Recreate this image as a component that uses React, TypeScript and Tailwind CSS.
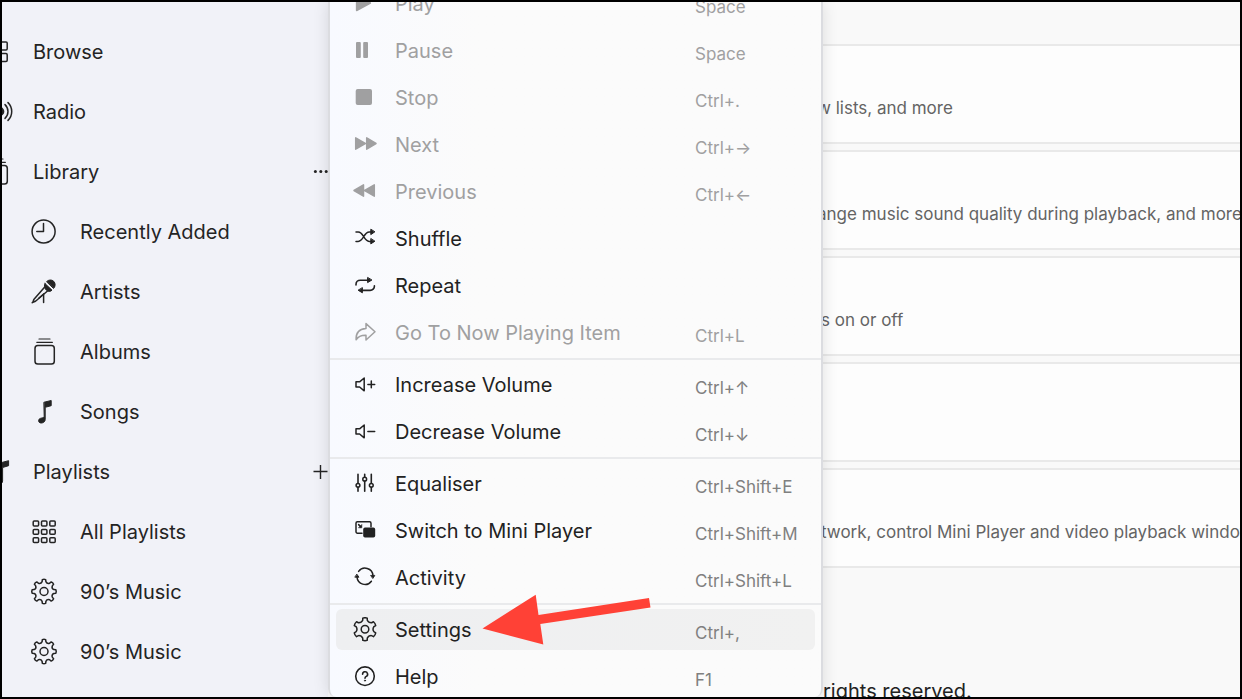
import React from 'react';

/**
 * Builds a closed outline for a cog, centred on (cx, cy)
 */
const cogPath = (teeth: number, cx: number, cy: number, outer: number, inner: number, tip: number, base: number) => {
  const step = (Math.PI * 2) / teeth;
  const point = (angle: number, r: number) =>
    `${(cx + Math.sin(angle) * r).toFixed(2)} ${(cy - Math.cos(angle) * r).toFixed(2)}`;

  let d = '';
  for (let i = 0; i < teeth; i++) {
    const a = i * step;
    d += `${i === 0 ? 'M' : 'L'}${point(a - tip, outer)}`;
    d += `Q${point(a, outer + 0.6)} ${point(a + tip, outer)}`;
    d += `L${point(a + base, inner + 0.8)}`;
    d += `Q${point(a + step / 2, inner - 1.2)} ${point(a + step - base, inner + 0.8)}`;
  }
  return d + 'Z';
};

const SideIcon: React.FC<{ children: React.ReactNode }> = ({ children }) => (
  <svg
    className="size-8 shrink-0"
    viewBox="0 0 32 32"
    fill="none"
    stroke="currentColor"
    strokeWidth="1.5"
    strokeLinecap="round"
    strokeLinejoin="round"
    aria-hidden="true"
  >
    {children}
  </svg>
);

const MenuIcon: React.FC<{ children: React.ReactNode }> = ({ children }) => (
  <svg
    className="size-[25px] shrink-0"
    viewBox="0 0 25 25"
    fill="none"
    stroke="currentColor"
    strokeWidth="1.5"
    strokeLinecap="round"
    strokeLinejoin="round"
    aria-hidden="true"
  >
    {children}
  </svg>
);

const AlbumShapes = () => (
  <>
    <rect x="7" y="9.6" width="19.3" height="18.4" rx="2.8" />
    <path d="M8.8 6.3h15.6M11 3h11" strokeWidth="1.2" />
  </>
);

const SmartPlaylistShapes = () => (
  <>
    <path d={cogPath(8, 16, 15.5, 12, 9.2, 0.14, 0.19)} />
    <circle cx="16" cy="15.5" r="4" />
  </>
);

interface SideItem {
  id: number;
  label: string;
  nested?: boolean;
  action?: 'more' | 'add';
  icon: React.ReactNode;
}

const sideItems: SideItem[] = [
  {
    id: 1,
    label: 'Browse',
    icon: (
      <>
        <rect x="17.6" y="5.9" width="8.6" height="8" rx="1.2" />
        <rect x="17.6" y="17.5" width="8.6" height="8" rx="1.2" />
        <rect x="6" y="5.9" width="8.6" height="8" rx="1.2" />
        <rect x="6" y="17.5" width="8.6" height="8" rx="1.2" />
      </>
    ),
  },
  {
    id: 2,
    label: 'Radio',
    icon: (
      <>
        <circle cx="19" cy="15.5" r="3.6" fill="currentColor" />
        <path d="M24 8.6a9.5 9.5 0 0 1 0 13.8M27 6.6a12.5 12.5 0 0 1 0 17.8" />
      </>
    ),
  },
  { id: 3, label: 'Library', action: 'more', icon: <AlbumShapes /> },
  {
    id: 4,
    label: 'Recently Added',
    nested: true,
    icon: (
      <>
        <circle cx="15.6" cy="15.5" r="11.5" />
        <path d="M15.5 7.6v8H8.8" />
      </>
    ),
  },
  {
    id: 5,
    label: 'Artists',
    nested: true,
    icon: (
      <>
        <path d="M18.8 5.4a4.8 4.8 0 1 1 7 6.8z" fill="currentColor" strokeWidth="1" />
        <path d="M17 7.6l7 6.6c-1.600 1.600-4 1.600-5.800-.2s-2.400-4.600-1.200-6.400z" fill="currentColor" strokeWidth="1" />
        <path d="M16.3 11.400L5.8 23.4l-.9 2.8 2.6-1 12-10.200M4.2 26.7l1.4-1.5" />
        <path d="M15.6 18v8.400M15.600 18l-4.600 4" />
      </>
    ),
  },
  { id: 6, label: 'Albums', nested: true, icon: <AlbumShapes /> },
  {
    id: 7,
    label: 'Songs',
    nested: true,
    icon: (
      <path
        d="M16.2 6.2l7-1.7v5.2l-6 1.6v12.2c0 4-6.6 4.8-6.6 1.2 0-2.6 3.2-2.6 4.6-3 .8-.2 1-.6 1-1.2z"
        fill="currentColor"
        strokeWidth="1"
      />
    ),
  },
  {
    id: 8,
    label: 'Playlists',
    action: 'add',
    icon: (
      <path
        d="M20.4 6.6l7.2-1.9v5l-6 1.8V25c0 4-6.6 4.8-6.6 1.2 0-2.6 3.2-2.6 4.6-3 .6-.2.8-.6.8-1.2z"
        fill="currentColor"
        strokeWidth="1"
      />
    ),
  },
  {
    id: 9,
    label: 'All Playlists',
    nested: true,
    icon: (
      <>
        {[5.1, 13.4, 21.8].map((y) =>
          [5.2, 13.5, 21.8].map((x) => <rect key={`${x}-${y}`} x={x} y={y} width="5.4" height="4.8" rx="1" />),
        )}
      </>
    ),
  },
  { id: 10, label: '90’s Music', nested: true, icon: <SmartPlaylistShapes /> },
  { id: 11, label: '90’s Music', nested: true, icon: <SmartPlaylistShapes /> },
];

interface MenuEntry {
  label: string;
  keys?: string;
  disabled?: boolean;
  active?: boolean;
  icon: React.ReactNode;
}

const speaker = <path d="M12.2 6v12.8L7.6 15H4V9.8h3.6z" />;

const menuGroups: MenuEntry[][] = [
  [
    { label: 'Play', keys: 'Space', disabled: true, icon: <path d="M4.6 4.6v15L18.4 12z" fill="currentColor" /> },
    {
      label: 'Pause',
      keys: 'Space',
      disabled: true,
      icon: (
        <g fill="currentColor" stroke="none">
          <rect x="4" y="4" width="4.8" height="16" rx="1" />
          <rect x="11.2" y="4" width="4.8" height="16" rx="1" />
        </g>
      ),
    },
    {
      label: 'Stop',
      keys: 'Ctrl+.',
      disabled: true,
      icon: <rect x="3.7" y="4" width="16.3" height="16" rx="2" fill="currentColor" stroke="none" />,
    },
    {
      label: 'Next',
      keys: 'Ctrl+→',
      disabled: true,
      icon: <path d="M3.7 5.8v11.4l9.6-5.7zM14.7 5.8v11.4l9.3-5.7z" fill="currentColor" />,
    },
    {
      label: 'Previous',
      keys: 'Ctrl+←',
      disabled: true,
      icon: <path d="M11.5 5.8v11.4L2 11.5zM22.3 5.8v11.4l-9.6-5.7z" fill="currentColor" />,
    },
    {
      label: 'Shuffle',
      icon: (
        <>
          <path d="M4 6h2.2c5.4 0 5.6 9.4 11 9.4H19M4 15.4h2.2c5.4 0 5.6-9.4 11-9.4H19" />
          <path d="M18.8 3.6v5L22.6 6zM18.8 12.9v5l3.8-2.5z" fill="currentColor" strokeWidth="1" />
        </>
      ),
    },
    {
      label: 'Repeat',
      icon: (
        <>
          <path d="M4 12v-.6a4.2 4.2 0 0 1 4.2-4.2H16M22.4 12.8v.4a4.2 4.2 0 0 1-4.2 4.2H10" strokeWidth="1.6" />
          <path d="M15.6 4.8v4.8l4-2.4zM10.4 15v4.8l-4-2.4z" fill="currentColor" strokeWidth="1" />
        </>
      ),
    },
    {
      label: 'Go To Now Playing Item',
      keys: 'Ctrl+L',
      disabled: true,
      icon: <path d="M14 3.6l9 8.2-9 8.2v-4.8c-5-.2-7.6.8-9.9 4.6-.4-7 3.2-11 9.9-11.4z" />,
    },
  ],
  [
    {
      label: 'Increase Volume',
      keys: 'Ctrl+↑',
      icon: (
        <>
          {speaker}
          <path d="M15.9 12.4h6.8M19.3 9v6.8" />
        </>
      ),
    },
    {
      label: 'Decrease Volume',
      keys: 'Ctrl+↓',
      icon: (
        <>
          {speaker}
          <path d="M15.9 12.4h6.8" />
        </>
      ),
    },
  ],
  [
    {
      label: 'Equaliser',
      keys: 'Ctrl+Shift+E',
      icon: (
        <>
          <path d="M6 3.2v9M6 16.4v3.8M12.7 3.2v3M12.7 10.2v10M19.3 3.2v9M19.3 16.4v3.8" strokeWidth="1.6" />
          <circle cx="6" cy="14.3" r="1.9" />
          <circle cx="12.7" cy="8.2" r="1.9" />
          <circle cx="19.3" cy="14.3" r="1.9" />
        </>
      ),
    },
    {
      label: 'Switch to Mini Player',
      keys: 'Ctrl+Shift+M',
      icon: (
        <>
          <path d="M10 15.2H5.4A1.4 1.4 0 0 1 4 13.8V5.2a1.4 1.4 0 0 1 1.4-1.4h12.2A1.4 1.4 0 0 1 19 5.2v3.6" />
          <rect x="11.2" y="9.6" width="12" height="10" rx="1.8" fill="currentColor" stroke="none" />
          <path d="M6.6 6.6l2 2" />
          <path d="M9.8 6.8v3H6.8z" fill="currentColor" strokeWidth="0.6" />
        </>
      ),
    },
    {
      label: 'Activity',
      keys: 'Ctrl+Shift+L',
      icon: (
        <>
          <path d="M6.6 6.4a8 8 0 0 1 14.4 4.2M19.4 16.2A8 8 0 0 1 5 12" />
          <path d="M3.2 12.2h3.8L5 9.4zM19 10.4h3.8L21 13.2z" fill="currentColor" strokeWidth="0.9" />
        </>
      ),
    },
  ],
  [
    {
      label: 'Settings',
      keys: 'Ctrl+,',
      active: true,
      icon: (
        <>
          <path d={cogPath(6, 13, 12.2, 11.3, 8.4, 0.2, 0.25)} />
          <circle cx="13" cy="12.2" r="3.8" />
        </>
      ),
    },
    {
      label: 'Help',
      keys: 'F1',
      icon: (
        <>
          <circle cx="13" cy="12.2" r="9.3" strokeWidth="1.6" />
          <path d="M10.6 10.2a2.5 2.5 0 1 1 3.7 2.2c-.9.5-1.3.9-1.3 1.8" strokeWidth="1.6" />
          <circle cx="13" cy="16.6" r="0.6" fill="currentColor" strokeWidth="0.8" />
        </>
      ),
    },
  ],
];

// tucked: the line begins underneath the edge of the open menu
const cards = [
  { text: 'w lists, and more', tucked: true },
  { text: 'ange music sound quality during playback, and more', tucked: true },
  { text: 's on or off', tucked: false },
  { text: '', tucked: false },
  { text: 'twork, control Mini Player and video playback windows', tucked: false },
];

const Sidebar = () => (
  <aside className="w-[326px] shrink-0 overflow-hidden bg-[#f1f2f8] pt-5 text-[#242424]">
    <nav aria-label="Library">
      {sideItems.map((item) => (
        <div key={item.id} className="flex h-[60px] items-center">
          <a href="#" className={`flex items-center gap-5 text-xl ${item.nested ? 'pl-[26px]' : '-ml-[21px]'}`}>
            <SideIcon>{item.icon}</SideIcon>
            {item.label}
          </a>
          {item.action && (
            <button type="button" className="ml-auto" aria-label={item.action === 'more' ? 'More' : 'Add playlist'}>
              <svg className="size-[15px]" viewBox="0 0 15 15" fill="currentColor" stroke="currentColor" aria-hidden="true">
                {item.action === 'more' ? (
                  <g stroke="none">
                    <circle cx="2.4" cy="6.5" r="1.5" />
                    <circle cx="7.8" cy="6.5" r="1.5" />
                    <circle cx="13.2" cy="6.5" r="1.5" />
                  </g>
                ) : (
                  <path d="M.5 6.5h14M7.5 0v14" strokeWidth="1.4" />
                )}
              </svg>
            </button>
          )}
        </div>
      ))}
    </nav>
  </aside>
);

const PlayerMenu = () => (
  <div className="z-10 w-[495px] shrink-0 overflow-hidden rounded-b-lg border-x-2 border-[#dbdce0] bg-linear-to-r from-[#f8faff] to-[#fbfbfb] to-30% shadow-[0_0_16px_rgba(0,0,0,0.12)]">
    <div className="-mt-[21px]" role="menu">
      {menuGroups.map((group, index) => (
        <div
          key={index}
          role="group"
          className={`flex flex-col px-1.5 ${index > 0 ? 'mt-px border-t-2 border-[#e9eaec] pt-[2px]' : ''}`}
        >
          {group.map((entry) => (
            <button
              key={entry.label}
              type="button"
              role="menuitem"
              disabled={entry.disabled}
              className={`mt-[2px] mb-1 flex h-[41px] w-full items-center rounded-md pl-4 text-left ${
                entry.active ? 'bg-linear-to-r from-[#eeeff1] to-[#f1f1f1]' : ''
              } ${entry.disabled ? 'text-[#a0a0a1]' : 'text-[#222222]'}`}
            >
              <MenuIcon>{entry.icon}</MenuIcon>
              <span className="w-[300px] shrink-0 pl-[18px] text-xl">{entry.label}</span>
              <span className={`ml-[18px] pt-2 text-[17px] ${entry.disabled ? 'text-[#a0a0a1]' : 'text-[#808080]'}`}>
                {entry.keys}
              </span>
            </button>
          ))}
        </div>
      ))}
    </div>
  </div>
);

/**
 * Main App Component
 */
export default function App() {
  return (
    <div className="relative flex h-screen overflow-hidden border-2 border-black bg-[#f9f9f9] font-['Inter',sans-serif]">
      <Sidebar />
      <PlayerMenu />

      {/* Settings cards */}
      <main className="-ml-1.5 min-w-0 flex-1 overflow-hidden whitespace-nowrap">
        <div className="mt-[42px] space-y-1.5">
          {cards.map((card, index) => (
            <section
              key={index}
              className={`flex h-[100px] items-end border-y-2 border-[#e9e9e9] bg-[#fdfdfd] pb-[21px] text-[17px] text-[#646464] ${
                card.tucked ? '' : 'pl-1'
              }`}
            >
              {card.text && <p>{card.text}</p>}
            </section>
          ))}
        </div>
        <p className="mt-[109px] pl-1.5 text-xl text-[#222222]">rights reserved.</p>
      </main>

      {/* Callout arrow over the menu */}
      <svg
        className="pointer-events-none absolute top-[592px] left-[480px] z-20 h-[52px] w-[170px]"
        viewBox="482 594 170 52"
        aria-hidden="true"
      >
        <path d="M482.5 628.5L535.7 594.8L538.5 615L649 598L650.5 607.5L540.3 624L543.3 644.5Z" fill="#ff4136" />
      </svg>
    </div>
  );
}
